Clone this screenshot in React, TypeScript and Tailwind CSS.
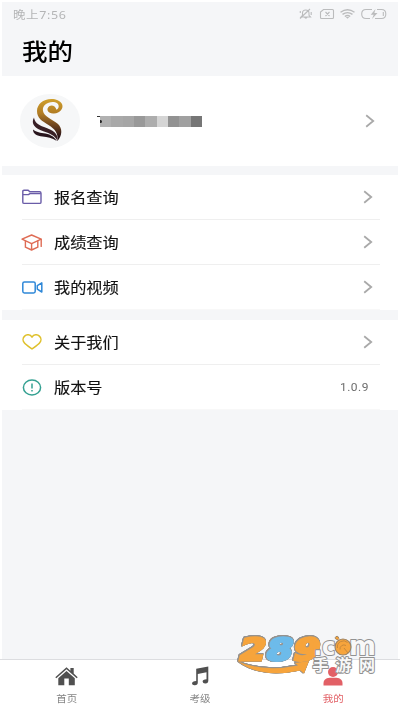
import React from 'react';

type IconProps = { className?: string };

const FolderIcon = ({ className }: IconProps) => (
  <svg className={className} viewBox="0 0 20 16" fill="none" stroke="#6a5ca8" strokeWidth="1.4" strokeLinejoin="round">
    <path d="M.8 13.2V2.4Q.8 1.2 2 1.2h4.2l1.6 1.6h9.8q1.4 0 1.4 1.4v9q0 1.2-1.4 1.2H2.2Q.8 14.4.8 13.2Z" />
    <path d="M1 5.6h5.4l1.6-1h10.8" />
  </svg>
);

const CapIcon = ({ className }: IconProps) => (
  <svg className={className} viewBox="0 0 22 17" fill="none" stroke="#df6c55" strokeWidth="1.4" strokeLinejoin="round" strokeLinecap="round">
    <path d="M1 5.2 10.6 1l9.6 4.2L10.6 9.6Z" />
    <path d="M4.4 7v6.2l6.2 2.8 6.2-2.8V7M10.6 9.8V16M20.2 5.4v7" />
  </svg>
);

const VideoIcon = ({ className }: IconProps) => (
  <svg className={className} viewBox="0 0 21 13" fill="none" stroke="#2f88d8" strokeWidth="1.5" strokeLinejoin="round">
    <rect x=".8" y=".9" width="12.4" height="11" rx="1.6" />
    <path d="M15.3 4.6 19.8 1.8v9.2l-4.5-2.8Z" />
  </svg>
);

const HeartIcon = ({ className }: IconProps) => (
  <svg className={className} viewBox="0 0 20 16" fill="none" stroke="#dfc02a" strokeWidth="1.5" strokeLinejoin="round">
    <path d="M10 3.2C8.300.2 4.600.1 2.600 2.100.6 4 .6 6.900 2.300 8.800 4 10.900 7 12.800 10 15c3-2.200 6-4.100 7.700-6.200 1.700-1.900 1.700-4.800-.3-6.700C15.400.1 11.700.2 10 3.200Z" />
  </svg>
);

const InfoIcon = ({ className }: IconProps) => (
  <svg className={className} viewBox="0 0 20 17" fill="none" stroke="#35a192" strokeWidth="1.5">
    <ellipse cx="10" cy="8.5" rx="8.6" ry="7.4" />
    <path d="M10 4.4v5.2M10 11v1.6" />
  </svg>
);

const Chevron = () => (
  <svg className="h-[14px] w-[10px]" viewBox="0 0 10 14" fill="none" stroke="#a9a9a9" strokeWidth="1.8">
    <path d="M1.2 1.3 8.2 7l-7 5.7" />
  </svg>
);

const StatusIcons = () => (
  <svg className="h-[12px] w-[89px]" viewBox="0 0 89 12" fill="none" stroke="#bbbcbd" strokeWidth="1.1">
    {/* muted bell */}
    <path d="M2 9h9.5L10 7.3V5q0-3-3.3-3-3.200 0-3.200 3v2.300ZM5.500 9.300q1.200 1.700 2.500 0M1 10.500 11 1M1.300 3v2M12.200 4v3" />
    {/* no sim */}
    <path d="M24.500 1.500h9q1 0 1 1v7q0 1-1 1h-11q-1 0-1-1V4ZM26.500 4l4 4M30.500 4l-4 4" />
    {/* wifi */}
    <path d="M41.500 4.200q7-5 14 0M43.500 6.400q5-3.600 10 0M45.800 8.500q2.700-1.900 5.400 0" strokeWidth="1.4" />
    <path d="m46.700 9 1.800 1.700L50.300 9Z" fill="#bbbcbd" stroke="none" />
    {/* battery */}
    <path d="M73 1.500h-6q-4.300 0-4.300 4.500t4.300 4.500h4M78 1.500h4.500q4.300 0 4.300 4.500t-4.300 4.500H76M84.300 4v4" />
    <path d="m76.500 1-4.800 5.700h3L73 11l5.500-5.900h-3.100Z" fill="#bbbcbd" stroke="none" />
  </svg>
);

const Avatar = () => (
  <svg className="h-[54px] w-[60px]" viewBox="0 0 60 54">
    <defs>
      <linearGradient id="gold" x1="0" y1="0" x2="0" y2="1">
        <stop offset="0" stopColor="#d0a02c" />
        <stop offset=".35" stopColor="#b07b24" />
        <stop offset=".65" stopColor="#68401f" />
        <stop offset=".9" stopColor="#281218" />
      </linearGradient>
    </defs>
    <ellipse cx="30" cy="27" rx="30" ry="27" fill="#f6f7f8" />
    <path
      d="M29.500 12C25 15.500 28.500 20 34 19.500C40 19 44 14.500 42 10C40 6.500 36 5 31.500 5C23 5 17 10.500 17 17C17 24 22 27 28.500 31C35 35 38.500 39.500 37.500 47C42.500 41 42.500 34.500 38 30C32 25 24 22.500 23 17C22 11 28 7.300 34 8C39.500 8.800 40 14 36.500 15.700C35.500 12 32 10.500 29.500 12Z"
      fill="url(#gold)"
    />
    <path d="M14 23.500C14.500 28 18 31 24 33C33 36 38.500 39.500 37.500 47C35 41.500 30 39.500 24 37.500C15 34.500 10.500 30 14 23.500Z" fill="#392026" />
    <path d="M13 35.500C16.500 38.500 20.500 38.700 25.500 39.500C31 40.500 35 43.500 36.800 47C32 44 27.500 43 22.500 42.500C17 42 13 40 13 35.500Z" fill="#28151d" />
  </svg>
);

const HomeIcon = () => (
  <svg className="h-[20px] w-[23px]" viewBox="0 0 23 20" fill="#505050">
    <path d="m11.500 1.200 3.900 3.500V2h3.300v5.600l4 3.600-1 1-10.200-9-10.200 9-1-1Z" />
    <path d="m11.500 4.900 8.300 7.300v7h-6v-6.700H9.300v6.700h-6v-7Z" />
  </svg>
);

const MusicIcon = () => (
  <svg className="h-[20px] w-[18px]" viewBox="0 0 18 20" fill="#505050">
    <path d="M5.200 2.800 17.300.5v14.200q0 2.500-2.800 2.800-2.700.2-2.900-1.900.1-2.200 3.900-2.300V6.200L6.800 7.900v8.500q0 2.600-2.900 2.900-2.800.2-2.900-1.800.1-2.300 4.200-2.500Z" />
  </svg>
);

const UserIcon = () => (
  <svg className="h-[20px] w-[20px]" viewBox="0 0 20 20" fill="#e26066">
    <ellipse cx="10" cy="6" rx="5" ry="5" />
    <path d="M.5 19.500v-2.500q0-4.500 6-5.200h7q6 .7 6 5.200v2.500Z" />
  </svg>
);

const Watermark = () => (
  <svg className="absolute top-[625px] left-[230px] h-[60px] w-[160px] overflow-visible" viewBox="0 0 160 60">
    <g
      className="[filter:drop-shadow(0.6px_0_0_#96928e)_drop-shadow(-0.6px_0_0_#96928e)_drop-shadow(0_0.6px_0_#96928e)_drop-shadow(0_-0.6px_0_#96928e)]"
      fontFamily="'DejaVu Sans', sans-serif"
      fontWeight="bold"
      strokeWidth="3"
      strokeLinejoin="miter"
    >
      <path d="M8 36.500q26 11 60 4l-3-2.500 14-2-5 12.500-3.500-3Q31 54 8 36.500Z" fill="#f6a43c" />
      <g transform="translate(7.500 34.500) skewX(-14) scale(1.240 1)" fontSize="30">
        <text x="0" y="0" fill="#f6a43c" stroke="#f6a43c">2</text>
        <text x="43.500" y="0" fill="#f6a43c" stroke="#f6a43c">9</text>
        <text x="21.800" y="0" fill="#6dbbea" stroke="#6dbbea">8</text>
      </g>
    </g>
    <g
      fontFamily="'DejaVu Sans', sans-serif"
      fontWeight="bold"
      fill="#f8f8f8"
      stroke="#929292"
      strokeWidth="2"
      paintOrder="stroke"
      strokeLinejoin="round"
    >
      <text x="83.500" y="30" fontSize="25" textLength="22" lengthAdjust="spacingAndGlyphs">.c</text>
      <text x="119" y="30" fontSize="27" textLength="27" lengthAdjust="spacingAndGlyphs">m</text>
      <g fontFamily="'Noto Sans CJK SC', sans-serif" fontSize="16">
        <text x="82.500" y="45.500">手</text>
        <text x="105.500" y="45.500">游</text>
        <text x="129" y="45.500">网</text>
      </g>
    </g>
    <circle cx="113" cy="22" r="8" fill="#f6a43c" stroke="#9b8468" strokeWidth="1.2" />
    <path d="M108.500 15q-5-1-2.500-3.500 2-1.200 3 2" fill="#f6a43c" stroke="#9b8468" />
    <path d="M107.500 23a6 6 0 0 1 10-5.500M110 24.500a4 4 0 0 1 6-4M114 23l4 5" fill="none" stroke="#c9893a" strokeWidth="1" />
  </svg>
);

const queryItems = [
  { label: '报名查询', icon: <FolderIcon className="h-[16px] w-[20px]" /> },
  { label: '成绩查询', icon: <CapIcon className="h-[17px] w-[22px]" /> },
  { label: '我的视频', icon: <VideoIcon className="h-[13px] w-[21px]" /> },
];

const aboutItems = [
  { label: '关于我们', icon: <HeartIcon className="h-[16px] w-[20px]" /> },
  { label: '版本号', icon: <InfoIcon className="h-[17px] w-[20px]" />, value: '1.0.9' },
];

const tabs = [
  { label: '首页', icon: <HomeIcon />, active: false },
  { label: '考级', icon: <MusicIcon />, active: false },
  { label: '我的', icon: <UserIcon />, active: true },
];

const mosaic = [
  'bg-[#b1b1b1]',
  'bg-[#a9a9a9]',
  'bg-[#a6a6a6]',
  'bg-[#999999]',
  'bg-[#adadad]',
  'bg-[#d5d5d5]',
  'bg-[#929292]',
  'bg-[#a0a0a0]',
  'bg-[#767676]',
];

type Item = { label: string; icon: React.ReactNode; value?: string };

const MenuRow = ({ item }: { item: Item }) => (
  <li className="mr-[18px] ml-5 flex h-[45px] items-center border-b border-[#efefef] last:border-[#f8f8f8]">
    <span className="-ml-px flex w-[22px] justify-center">{item.icon}</span>
    <span className="ml-[11px] inline-block scale-y-90 text-[16.200px] leading-6 text-[#111] [-webkit-text-stroke:0.15px_#111]">{item.label}</span>
    <span className="ml-auto flex items-center">
      {item.value ? (
        <span className="mr-[11px] inline-block scale-y-95 font-[Roboto,sans-serif] text-[12px] tracking-[0.5px] text-[#6c6c6c]">{item.value}</span>
      ) : (
        <span className="mr-[7px]"><Chevron /></span>
      )}
    </span>
  </li>
);

const App = () => {
  return (
    <div className="relative h-[711px] w-[400px] overflow-hidden bg-white px-[2px] pt-[2px] font-['Noto_Sans_CJK_SC',sans-serif]">
      <main className="flex h-[657px] flex-col bg-[#f5f6f8]">
        <header className="h-[74px]">
          <div className="flex h-[23px] items-center justify-between pr-[10px] pl-[11px]">
            <span className="mt-[3px] inline-block scale-y-90 font-['Noto_Sans','Noto_Sans_CJK_SC',sans-serif] text-[12.500px] leading-none tracking-[0.6px] text-[#b4b5b6]">
              晚上7:56
            </span>
            <StatusIcons />
          </div>
          <h1 className="mt-[9px] ml-5 origin-left scale-y-90 text-[25.500px] leading-8 font-medium text-black">我的</h1>
        </header>

        <section className="flex h-[90px] items-center bg-white pr-[23px] pl-[18px]">
          <Avatar />
          <div className="relative ml-5 flex h-[11px] w-[102px]">
            {mosaic.map((color, i) => (
              <span key={i} className={`flex-1 ${color}`} />
            ))}
            <span className="absolute top-0 -left-[3px] h-px w-[3px] bg-[#333]" />
            <span className="absolute top-[4px] left-0 h-[3px] w-[2px] rounded-r bg-[#222]" />
          </div>
          <span className="ml-auto"><Chevron /></span>
        </section>

        <ul className="mt-[9px] h-[135px] bg-white">
          {queryItems.map((item) => (
            <MenuRow key={item.label} item={item} />
          ))}
        </ul>

        <ul className="mt-[10px] h-[90px] bg-white">
          {aboutItems.map((item) => (
            <MenuRow key={item.label} item={item} />
          ))}
        </ul>
      </main>

      <nav className="-mx-[2px] grid h-[52px] grid-cols-3 border-t border-[#dcdde0] bg-white">
        {tabs.map((tab) => (
          <button key={tab.label} type="button" className="flex flex-col items-center pt-[6px]">
            {tab.icon}
            <span className={`mt-[5px] inline-block scale-y-90 text-[10.500px] leading-[14px] ${tab.active ? 'text-[#e26066]' : 'text-[#858585]'}`}>
              {tab.label}
            </span>
          </button>
        ))}
      </nav>

      <Watermark />
    </div>
  );
};

export default App;
